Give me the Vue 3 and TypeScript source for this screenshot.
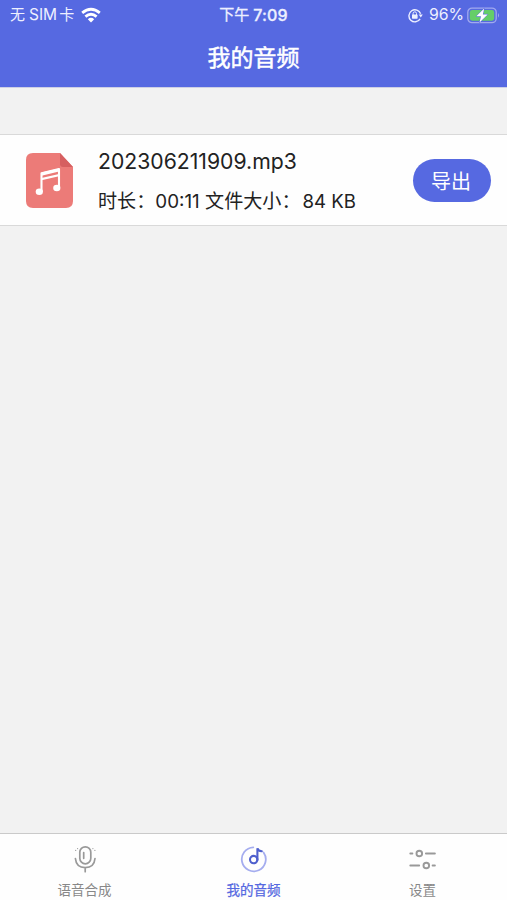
<script setup lang="ts">
import { ref } from 'vue'

interface AudioFile {
  name: string
  duration: string
  size: string
}

type TabId = 'speech' | 'audio' | 'settings'

const files = ref<AudioFile[]>([
  { name: '202306211909.mp3', duration: '00:11', size: '84 KB' },
])
const tabs: { id: TabId; label: string }[] = [
  { id: 'speech', label: '语音合成' },
  { id: 'audio', label: '我的音频' },
  { id: 'settings', label: '设置' },
]
const active = ref<TabId>('audio')
</script>

<template>
  <div class="screen">
    <header class="top">
      <div class="status">
        <div class="carrier">
          <span>无</span><span class="sim">SIM</span><span>卡</span>
          <svg class="wifi" width="20" height="16" viewBox="0 0 20 16">
            <g fill="none" stroke="#fff" stroke-width="2.8">
              <path d="M1.2 5.9Q10-1.5 18.8 5.9" />
              <path d="M4.4 9.6Q10 4.9 15.6 9.6" />
            </g>
            <path d="M6.8 12.2Q10 9.4 13.2 12.2L10 15.4Z" fill="#fff" />
          </svg>
        </div>
        <div class="clock"><span>下午</span><span class="time">7:09</span></div>
        <div class="power">
          <svg class="lock" width="15" height="15" viewBox="0 0 15 15">
            <path d="M12.1 10.9A6 6 0 1 1 12.6 5.8" fill="none" stroke="#eef0ff" stroke-width="1.4" />
            <path d="M10.7 6.4H14.8L12.8 9.6Z" fill="#eef0ff" />
            <rect x="4" y="6.5" width="5.6" height="4.2" rx=".6" fill="#eef0ff" />
            <path d="M5.1 7V5.5a1.7 1.7 0 0 1 3.4 0V7" fill="none" stroke="#eef0ff" stroke-width="1" />
          </svg>
          <span class="percent">96%</span>
          <svg width="33" height="17" viewBox="0 0 33 17">
            <rect x=".8" y="1.1" width="28.4" height="14.6" rx="4.2" fill="none" stroke="#a1a9ef" stroke-width="1.3" />
            <rect x="2.8" y="3.1" width="24.4" height="10.6" rx="2.4" fill="#65ce68" />
            <path d="M31 6Q33 8.4 31 10.8Z" fill="#a1a9ef" />
            <path d="M17.2 1.5L9.3 9.3H14L12.5 15.5L20.7 7.4H15.9Z" fill="#fff" stroke="#5767df" stroke-width="1" paint-order="stroke" />
          </svg>
        </div>
      </div>
      <h1>我的音频</h1>
    </header>

    <main>
      <article v-for="file in files" :key="file.name" class="row">
        <svg class="file" width="47" height="55" viewBox="0 0 47 55">
          <path d="M7 0H34L47 14V48Q47 55 40 55H7Q0 55 0 48V7Q0 0 7 0Z" fill="#ec7b78" />
          <path d="M34 0L47 14H37Q34 14 34 11Z" fill="#d65f60" />
          <path d="M15.5 39V20.2L33 16.1V35" fill="none" stroke="#fff" stroke-width="2.1" stroke-linejoin="round" />
          <path d="M15.5 19.6L33 15.5V18.6L15.5 22.7ZM15.5 25.1L33 21V23.2L15.5 27.3Z" fill="#fff" />
          <ellipse cx="13.3" cy="38.8" rx="3.6" ry="3.3" fill="#fff" />
          <ellipse cx="30.8" cy="35" rx="3.6" ry="3.3" fill="#fff" />
        </svg>
        <div class="info">
          <div class="name">{{ file.name }}</div>
          <div class="meta">时长：<span class="dur">{{ file.duration }}</span> 文件大小：<span class="size">{{ file.size }}</span></div>
        </div>
        <button class="export">导出</button>
      </article>
    </main>

    <nav>
      <button v-for="tab in tabs" :key="tab.id" class="tab" :class="{ active: active === tab.id }" @click="active = tab.id">
        <svg v-if="tab.id === 'speech'" width="28" height="28" viewBox="0 0 28 28" fill="none" stroke="#999" stroke-width="1.7" stroke-linecap="round">
          <rect x="8.8" y="1.8" width="11" height="17" rx="5.5" />
          <path d="M12.7 7.5V13.3M4.4 13.5Q5.2 22.6 14.2 22.6T24 13.5M14.2 23V26.7" />
          <path d="M6.6 3.5v.1M4.7 5.4v.1M21.9 3.5v.1M23.9 5.4v.1" stroke-width="1.2" />
        </svg>
        <svg v-else-if="tab.id === 'audio'" width="28" height="28" viewBox="0 0 28 28" fill="none">
          <path d="M13.3 2.3A12 12 0 1 0 23.6 7.4" stroke="#a5adef" stroke-width="1.8" stroke-linecap="round" />
          <circle cx="13.7" cy="14.6" r="3.7" stroke="#4e5fcd" stroke-width="2.1" />
          <path d="M17.4 15V3.3Q17.9 6 21.8 6.2" stroke="#4e5fcd" stroke-width="2.1" stroke-linecap="round" />
        </svg>
        <svg v-else width="28" height="28" viewBox="0 0 28 28" fill="none" stroke="#999" stroke-width="1.9" stroke-linecap="round">
          <path d="M1.3 8.5H3.4M16.9 8.5H25.9M1.3 20.5H10.2M23.6 20.5H25.9" />
          <circle cx="10.3" cy="8.5" r="2.8" /><circle cx="17.3" cy="20.5" r="2.8" />
        </svg>
        <span>{{ tab.label }}</span>
      </button>
    </nav>
  </div>
</template>

<style>
body {
  margin: 0;
}
</style>

<style scoped>
.screen {
  display: flex;
  flex-direction: column;
  height: 900px;
  background: #f2f2f2;
  font-family: Inter, "Noto Sans CJK SC", sans-serif;
  color: #222;
}
.top {
  box-sizing: border-box;
  height: 88px;
  background: #5669e1;
  border-bottom: 1px solid #cdd0e5;
  color: #fff;
}
.status {
  box-sizing: border-box;
  display: grid;
  grid-template-columns: 1fr auto 1fr;
  align-items: center;
  height: 29px;
  padding: 1px 7px 0 10px;
  font-size: 15px;
  line-height: 28px;
}
.carrier,
.clock,
.power {
  display: flex;
  align-items: center;
  color: #eef0ff;
}
.sim {
  margin: 0 2px 0 4px;
  font-size: 15.5px;
}
.wifi {
  margin-left: 7px;
}
.clock {
  gap: 4px;
  padding-right: 3px;
  -webkit-text-stroke: 0.3px currentColor;
}
.time {
  font-weight: 500;
  font-size: 16px;
  letter-spacing: 0.2px;
}
.power {
  justify-content: flex-end;
}
.percent {
  margin: 0 3px 0 6px;
  font-size: 15.8px;
}
h1 {
  margin: 0;
  font-size: 23px;
  font-weight: 400;
  line-height: 58px;
  text-align: center;
  -webkit-text-stroke: 0.5px currentColor;
}
main {
  flex: 1;
  padding-top: 46px;
}
.row {
  box-sizing: border-box;
  display: flex;
  align-items: center;
  height: 92px;
  padding: 0 16px 0 26px;
  background: #fefefe;
  border-top: 1px solid #d9d9d9;
  border-bottom: 1px solid #d9d9d9;
}
.file {
  flex: none;
}
.info {
  flex: 1;
  margin-left: 25px;
  padding-top: 3px;
  white-space: nowrap;
}
.name {
  font-size: 21.2px;
  line-height: 40px;
}
.meta {
  font-size: 19.1px;
  line-height: 41px;
}
.dur {
  font-size: 18.8px;
}
.size {
  margin-left: 2px;
  font-size: 18.6px;
}
.export {
  width: 78px;
  height: 43px;
  padding: 0 2px 0 0;
  border: 0;
  border-radius: 22px;
  background: #5669e1;
  color: #fff;
  font: 20px/43px "Noto Sans CJK SC", sans-serif;
}
nav {
  box-sizing: border-box;
  display: grid;
  grid-template-columns: repeat(3, 1fr);
  height: 67px;
  border-top: 1px solid #cacaca;
  background: #fefefe;
}
.tab {
  display: flex;
  flex-direction: column;
  align-items: center;
  gap: 6px;
  padding: 11px 0 0;
  border: 0;
  background: none;
  color: #888;
  font: 13.5px/20px "Noto Sans CJK SC", sans-serif;
}
.tab.active {
  color: #5669e1;
  -webkit-text-stroke: 0.25px currentColor;
}
</style>
